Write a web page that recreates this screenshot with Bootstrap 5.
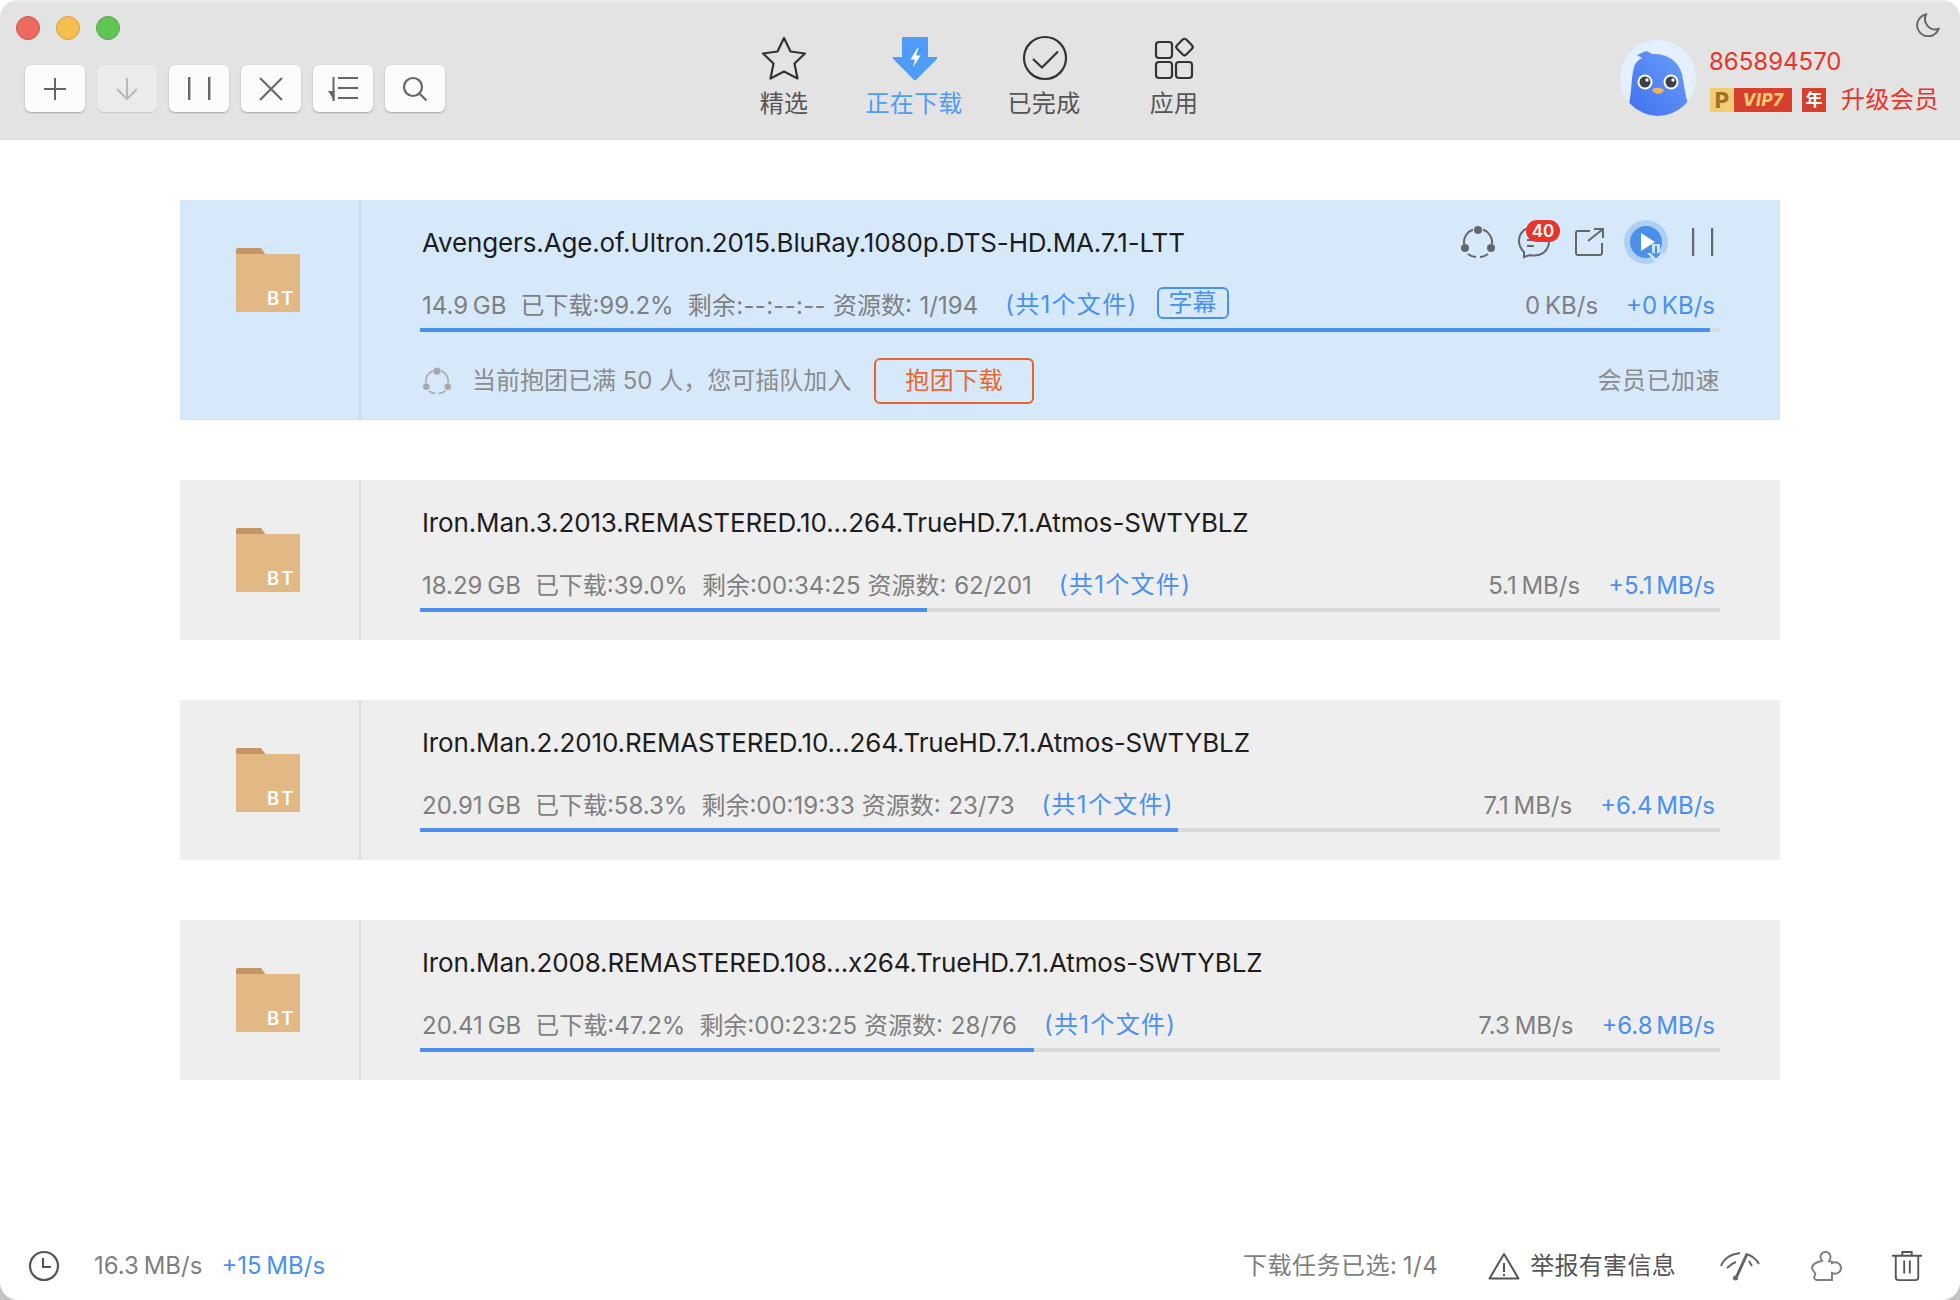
<!DOCTYPE html>
<html lang="zh">
<head>
<meta charset="utf-8">
<title>下载</title>
<link href="https://cdn.jsdelivr.net/npm/bootstrap@5.3.0/dist/css/bootstrap.min.css" rel="stylesheet">
<style>
html,body{height:1300px;overflow:hidden}
body{margin:0;background:linear-gradient(#fff 50%,#c4c4c4 50%);font-family:Inter,"Noto Sans CJK SC",sans-serif;font-size:24px;color:#7f7f7f}
.win{width:1960px;height:1300px;border-radius:18px;overflow:hidden;background:#fff}
.topbar{height:140px;flex:none;background:#e3e3e3;border-top:2px solid #eee}
.leftpane{width:719px;flex:none;padding:14px 0 0 16px}
.lights{gap:16px;height:24px}
.dot{width:24px;height:24px;border-radius:50%;border:1px solid}
.d1{background:#ec6a5e;border-color:#d05347}
.d2{background:#f4bf4f;border-color:#d69e3a}
.d3{background:#61c554;border-color:#50a844}
.tools{gap:12px;margin:25px 0 0 9px}
.tbtn{width:60px;height:47px;padding:0;border:0;border-radius:6px;background:#fbfbfb;box-shadow:0 1px 2px rgba(0,0,0,.28);display:flex;align-items:center;justify-content:center}
.tbtn.off,.tbtn.off:disabled{background:#ebebeb;opacity:1;box-shadow:0 1px 1px rgba(0,0,0,.12)}
.navit{width:130px;padding-top:33px;color:#555;line-height:30px;text-align:center;letter-spacing:.3px}
.navit svg{display:block;margin:0 auto 8px;height:46px}
.navit.on{color:#4f9bf8}
.userpane{padding:0 0 0 381px;position:relative;flex:1}
.ava{width:76px;height:76px;margin-top:38px;flex:none}
.uinfo{margin:0 0 0 13px;padding-top:45px;color:#e8352a}
.uname{line-height:30px;font-size:24px}
.vips{margin:11px 0 0 1px;height:24px}
.vp{width:24px;height:24px;background:#f2cd73;color:#a0722a;font-weight:800;font-size:22px;line-height:24px;text-align:center}
.vv{width:58px;height:24px;background:#d83f2c;color:#f2cd73;font-weight:800;font-size:17px;font-style:italic;letter-spacing:.5px;line-height:24px;text-align:center}
.vy{width:24px;height:24px;margin-left:10px;background:#d83f2c;color:#fff;font-weight:700;font-size:17px;line-height:24px;text-align:center}
.upg{margin-left:15px;line-height:24px;white-space:nowrap;letter-spacing:.5px}
.moon{position:absolute;right:20px;top:11px}
.tasks{padding:60px 180px 0;gap:60px}
.taskrow{height:160px;background:#eee}
.taskrow.big{height:220px;background:#d6e9fb}
.foldcell{width:181px;flex:none;border-right:2px solid #dcdcdc;padding:47px 0 0 56px}
.big .foldcell{border-color:#c8dbec}
.folder{width:64px;height:65px;display:block}
.bttx{font-family:Inter,sans-serif;font-size:18.5px;font-weight:600;letter-spacing:3px;fill:#fff}
.bodycell{padding-left:59px;width:1359px;flex:none}
.ttl{height:60px;padding:28px 0 0 2px;line-height:30px;font-size:26px;color:#1d1d1d;letter-spacing:-.14px;white-space:nowrap}
.meta{margin-top:31px;height:30px;line-height:30px;padding:0 5px 0 2px;width:1300px;white-space:nowrap;word-spacing:-2px}
.meta>span{display:inline-block}
.sp1{margin-left:14px}
.sp2{margin-left:14px}
.dash{letter-spacing:.3px}
.sp3{margin-left:7px;word-spacing:1px}
.sp4{margin-left:27px;letter-spacing:1.3px;margin-bottom:2px}
.lnk{color:#4a90f0}
.subt{width:72px;height:32px;border:2px solid #4a90f0;border-radius:6px;color:#4a90f0;line-height:27px;text-align:center;margin-left:19px;margin-bottom:6px}
.spd{margin-left:auto;margin-right:4px}
.spx{word-spacing:-3px}
.trk{height:4px;margin-top:7px;width:1300px;background:#d9d9d9;border-radius:0}
.trk .progress-bar{background:#4a8ef0}
.tic{position:absolute;top:20px;right:65px;height:44px}
.g22{margin-left:22px}
.g24{margin-left:24px}
.g19{margin-left:19px}
.ic4{align-self:flex-start}
.teamrow{height:46px;margin-top:26px;padding-left:3px}
.teamtx{color:#8c8c8c;margin-left:21px}
.tuan{width:160px;height:46px;margin-left:23px;border:2px solid #e8622c;border-radius:6px;color:#e8682f;font-size:24px;letter-spacing:.5px;padding:0;background:transparent;line-height:40px}
.tuan:hover{color:#e8622c;border-color:#e8622c;background:transparent}
.acc{margin-left:auto;color:#8c8c8c;letter-spacing:.5px}
.bdg{position:absolute;left:1346px;top:20px;width:34px;height:22px;background:#e8352a;color:#fff;border-radius:11px;font-size:17px;line-height:22px;font-weight:600;text-align:center;padding:0;margin:0}
.botbar{margin-top:auto;height:70px;padding:2px 38px 0 28px;word-spacing:-2px}
.spdnow{margin-left:34px}
.gapl{margin-left:19px}
.dk{color:#555;margin-left:10px;word-spacing:0;letter-spacing:.3px}
.warnw{margin-left:50px}
.selc{letter-spacing:.5px}
.g44{margin-left:44px}
.g50{margin-left:50px}
</style>
</head>
<body>
<div class="win d-flex flex-column">
  <header class="topbar d-flex">
    <div class="leftpane">
      <div class="lights d-flex"><span class="dot d1"></span><span class="dot d2"></span><span class="dot d3"></span></div>
      <div class="tools d-flex">
        <button class="btn tbtn" aria-label="add"><svg width="24" height="24" viewBox="0 0 24 24" stroke="#666" stroke-width="2" fill="none"><path d="M12 1v22M1 12h22"/></svg></button>
        <button class="btn tbtn off" disabled aria-label="start"><svg width="24" height="24" viewBox="0 0 24 24" stroke="#b9b9b9" stroke-width="2" fill="none"><path d="M12 1v21M2 12l10 10 10-10"/></svg></button>
        <button class="btn tbtn" aria-label="pause"><svg width="24" height="24" viewBox="0 0 24 24" fill="#666"><rect x="1" y="0" width="2.4" height="23"/><rect x="21" y="0" width="2.4" height="23"/></svg></button>
        <button class="btn tbtn" aria-label="delete"><svg width="24" height="24" viewBox="0 0 24 24" stroke="#666" stroke-width="2" fill="none"><path d="M1 1l22 22M23 1L1 23"/></svg></button>
        <button class="btn tbtn" aria-label="sort"><svg width="32" height="26" viewBox="0 0 32 26" fill="#666"><rect x="11" y="1" width="20" height="2"/><rect x="11" y="11" width="20" height="2"/><rect x="11" y="21" width="20" height="2"/><rect x="5.500" y="1" width="2" height="24"/><path d="M1 15h6.500v10z"/></svg></button>
        <button class="btn tbtn" aria-label="search"><svg width="26" height="26" viewBox="0 0 26 26" stroke="#666" stroke-width="2.200" fill="none"><circle cx="11" cy="11" r="9"/><path d="M17.500 17.500l7 7"/></svg></button>
      </div>
    </div>
    <nav class="d-flex">
      <div class="navit"><svg width="46" height="46" viewBox="0 0 46 46" fill="none" stroke="#333" stroke-width="2.200" stroke-linejoin="round"><path d="M23 3l6.500 13.500 14.500 2-10.500 10 3 15L23 36.500 9.500 43.500l3-15L2 18.500l14.500-2z"/></svg>精选</div>
      <div class="navit on"><svg width="46" height="46" viewBox="-1 0 46 46"><path d="M11 2h24a1 1 0 0 1 1 1v19h8.500a1 1 0 0 1 .7 1.700L24.500 44.500a2 2 0 0 1-3 0L1 23.700a1 1 0 0 1 .7-1.700H10V3a1 1 0 0 1 1-1z" fill="#4f9bf8"/><path d="M25.500 13l-7 11.500h4.500l-2 8 7.500-12h-4.500l2.500-7.500z" fill="#fff"/></svg>正在下载</div>
      <div class="navit"><svg width="46" height="46" viewBox="-1 0 46 46" fill="none" stroke="#333" stroke-width="2.200"><circle cx="23" cy="23" r="21"/><path d="M11 24l9 8.500 16-16"/></svg>已完成</div>
      <div class="navit"><svg width="46" height="46" viewBox="-2 0 46 46" fill="none" stroke="#333" stroke-width="2.200"><rect x="3" y="7" width="16" height="16" rx="3"/><rect x="3" y="27" width="16" height="16" rx="3"/><rect x="23" y="27" width="16" height="16" rx="3"/><rect x="25" y="5.500" width="13" height="13" rx="2.500" transform="rotate(45 31.500 12)"/></svg>应用</div>
    </nav>
    <div class="userpane d-flex">
      <svg class="ava" viewBox="0 0 76 76"><defs><linearGradient id="bg1" x1="0" y1="1" x2="1" y2="0"><stop offset="0" stop-color="#3f70f0"/><stop offset="1" stop-color="#6da0f8"/></linearGradient><clipPath id="cc"><circle cx="38" cy="38" r="38"/></clipPath></defs><circle cx="38" cy="38" r="38" fill="#e4f0fe"/><g clip-path="url(#cc)"><path d="M9 64C12 50 11 38 14 27c1-4 4-7 8-9l-5-3 9-4c3 1 4 2 6 3 12-1 26 5 30 20 2 10 3 20 6 30-6 14-46 20-59 0z" fill="url(#bg1)"/></g><circle cx="25" cy="42" r="7.500" fill="#fff"/><circle cx="51" cy="42" r="7.500" fill="#fff"/><circle cx="25" cy="42" r="5.500" fill="#3a3f4a"/><circle cx="51" cy="42" r="5.500" fill="#3a3f4a"/><circle cx="27" cy="40" r="1.700" fill="#fff"/><circle cx="53" cy="40" r="1.700" fill="#fff"/><path d="M32 50c2-3 9-3 12 0-2 5-9 5-12 0z" fill="#edb65a"/></svg>
      <div class="uinfo">
        <div class="uname">865894570</div>
        <div class="vips d-flex"><div class="vp">P</div><div class="vv">VIP7</div><div class="vy">年</div><div class="upg">升级会员</div></div>
      </div>
      <svg class="moon" width="24" height="24" viewBox="0 0 24 24" fill="none" stroke="#666" stroke-width="2"><path d="M10 1.500A11 11 0 1 0 22.500 16 10.500 10.500 0 0 1 10 1.500z"/></svg>
    </div>
  </header>

  <main class="tasks d-flex flex-column">
    <section class="taskrow big d-flex position-relative">
      <div class="foldcell"><svg class="folder" viewBox="0 0 64 65"><path d="M0 8V3a2 2 0 0 1 2-2h23l5 7z" fill="#c79563"/><rect y="7" width="64" height="58" fill="#e2b985"/><text x="31" y="58" class="bttx">BT</text></svg></div>
      <div class="bodycell">
        <div class="ttl">Avengers.Age.of.Ultron.2015.BluRay.1080p.DTS-HD.MA.7.1-LTT</div>
        <div class="meta d-flex align-items-center"><span>14.9 GB</span><span class="sp1">已下载:99.2%</span><span class="sp2 dash">剩余:--:--:--</span><span class="sp3">资源数: 1/194</span><span class="lnk sp4">(共1个文件)</span><span class="subt">字幕</span><span class="spd">0 KB/s</span><span class="lnk ms-4">+0 KB/s</span></div>
        <div class="progress trk"><div class="progress-bar" style="width:99.2%"></div></div>
        <div class="teamrow d-flex align-items-center">
          <svg width="28" height="28" viewBox="0 0 34 34" fill="none" stroke="#a9a9a9" stroke-width="2"><path d="M12 4.500A14 14 0 0 0 3.500 20M22 4.500A14 14 0 0 1 30.500 20M7 29A14 14 0 0 0 15 32M19 32A14 14 0 0 0 27 29"/><circle cx="17" cy="5" r="4.500" fill="#a9a9a9" stroke="none"/><circle cx="4" cy="24" r="4" fill="#a9a9a9" stroke="none"/><circle cx="30" cy="24" r="4" fill="#a9a9a9" stroke="none"/></svg>
          <span class="teamtx">当前抱团已满 50 人，您可插队加入</span>
          <button class="btn tuan">抱团下载</button>
          <span class="acc">会员已加速</span>
        </div>
      </div>
      <div class="tic d-flex align-items-center">
        <svg width="34" height="36" viewBox="0 0 34 36" fill="none" stroke="#666" stroke-width="2"><path d="M12 5.500A14 14 0 0 0 3 20M22 5.500A14 14 0 0 1 31 20M7 30A14 14 0 0 0 15 33M19 33A14 14 0 0 0 27 30"/><circle cx="17" cy="6" r="4" fill="#666" stroke="none"/><circle cx="4" cy="24" r="4" fill="#666" stroke="none"/><circle cx="30" cy="24" r="4" fill="#666" stroke="none"/></svg>
        <svg class="g22" width="34" height="36" viewBox="0 0 34 36" fill="none" stroke="#666" stroke-width="2"><path d="M17 3C8 3 2 9 2 17c0 5 2 8 5 11v5l6-2c1 .4 3 .6 4 .6 9 0 15-6 15-14.600S26 3 17 3zM10 16h10M10 22h7"/></svg>
        <svg class="g24" width="30" height="30" viewBox="0 0 30 30" fill="none" stroke="#666" stroke-width="2"><path d="M15 4H3a2 2 0 0 0-2 2v20a2 2 0 0 0 2 2h22a2 2 0 0 0 2-2V16M28 2L13 14M19 2h9v9"/></svg>
        <svg class="g19 ic4" width="48" height="48" viewBox="0 0 48 48"><circle cx="22" cy="22" r="22" fill="#aed0f7"/><circle cx="22" cy="22" r="16" fill="#4a8fe8"/><path d="M17 13l14 9-14 9z" fill="#fff"/><path d="M28 24h8v9h5l-9 10-9-10h5z" fill="#cfe4fb"/><path d="M32 26v11M28 33l4 4 4-4" stroke="#4a8fe8" stroke-width="2" fill="none"/></svg>
        <svg class="g19" width="24" height="30" viewBox="0 0 24 30" fill="#666"><rect x="1" y="1" width="2.200" height="28"/><rect x="20" y="1" width="2.200" height="28"/></svg>
      </div>
      <span class="badge bdg">40</span>
    </section>

    <section class="taskrow d-flex">
      <div class="foldcell"><svg class="folder" viewBox="0 0 64 65"><path d="M0 8V3a2 2 0 0 1 2-2h23l5 7z" fill="#c79563"/><rect y="7" width="64" height="58" fill="#e2b985"/><text x="31" y="58" class="bttx">BT</text></svg></div>
      <div class="bodycell">
        <div class="ttl">Iron.Man.3.2013.REMASTERED.10...264.TrueHD.7.1.Atmos-SWTYBLZ</div>
        <div class="meta d-flex align-items-center"><span>18.29 GB</span><span class="sp1">已下载:39.0%</span><span class="sp2">剩余:00:34:25</span><span class="sp3">资源数: 62/201</span><span class="lnk sp4">(共1个文件)</span><span class="spd">5.1 MB/s</span><span class="lnk ms-4 spx">+5.1 MB/s</span></div>
        <div class="progress trk"><div class="progress-bar" style="width:39%"></div></div>
      </div>
    </section>

    <section class="taskrow d-flex">
      <div class="foldcell"><svg class="folder" viewBox="0 0 64 65"><path d="M0 8V3a2 2 0 0 1 2-2h23l5 7z" fill="#c79563"/><rect y="7" width="64" height="58" fill="#e2b985"/><text x="31" y="58" class="bttx">BT</text></svg></div>
      <div class="bodycell">
        <div class="ttl">Iron.Man.2.2010.REMASTERED.10...264.TrueHD.7.1.Atmos-SWTYBLZ</div>
        <div class="meta d-flex align-items-center"><span>20.91 GB</span><span class="sp1">已下载:58.3%</span><span class="sp2">剩余:00:19:33</span><span class="sp3">资源数: 23/73</span><span class="lnk sp4">(共1个文件)</span><span class="spd">7.1 MB/s</span><span class="lnk ms-4 spx">+6.4 MB/s</span></div>
        <div class="progress trk"><div class="progress-bar" style="width:58.3%"></div></div>
      </div>
    </section>

    <section class="taskrow d-flex">
      <div class="foldcell"><svg class="folder" viewBox="0 0 64 65"><path d="M0 8V3a2 2 0 0 1 2-2h23l5 7z" fill="#c79563"/><rect y="7" width="64" height="58" fill="#e2b985"/><text x="31" y="58" class="bttx">BT</text></svg></div>
      <div class="bodycell">
        <div class="ttl">Iron.Man.2008.REMASTERED.108...x264.TrueHD.7.1.Atmos-SWTYBLZ</div>
        <div class="meta d-flex align-items-center"><span>20.41 GB</span><span class="sp1">已下载:47.2%</span><span class="sp2">剩余:00:23:25</span><span class="sp3">资源数: 28/76</span><span class="lnk sp4">(共1个文件)</span><span class="spd">7.3 MB/s</span><span class="lnk ms-4 spx">+6.8 MB/s</span></div>
        <div class="progress trk"><div class="progress-bar" style="width:47.2%"></div></div>
      </div>
    </section>
  </main>

  <footer class="botbar d-flex align-items-center">
    <svg width="32" height="32" viewBox="0 0 32 32" fill="none" stroke="#555" stroke-width="2.200"><circle cx="16" cy="16" r="14"/><path d="M15 8v9h8"/></svg>
    <span class="spdnow">16.3 MB/s</span><span class="lnk gapl">+15 MB/s</span>
    <span class="ms-auto selc">下载任务已选: 1/4</span>
    <svg class="warnw" width="32" height="28" viewBox="0 0 32 28" fill="none" stroke="#555" stroke-width="2" stroke-linejoin="round"><path d="M16 2L1.500 26.500h29zM16 11v9M16 22v2"/></svg>
    <span class="dk">举报有害信息</span>
    <svg class="g44" width="40" height="30" viewBox="0 0 40 30" fill="none" stroke="#666" stroke-width="2"><path d="M1 15C4 7 12 3 20 2M26 3c5 1 10 5 13 10M7 17c3-3 6-5 9-6M29 10l3 5"/><path d="M27 3L16 27" stroke-width="3"/><circle cx="15.500" cy="27" r="2.500" fill="#666" stroke="none"/></svg>
    <svg class="g50" width="32" height="30" viewBox="0 0 32 30" fill="none" stroke="#808080" stroke-width="2"><path d="M12 10C9 6 11 1 15.500 1C20 1 22 6 19 10L22 11V12C27 10 31 13 31 17C31 21 27 24 22 22V29H7C5 29 3 27 5 24C7 22 2 20 2 17C2 13 6 12 8 11Z"/></svg>
    <svg class="g50" width="30" height="32" viewBox="0 0 32 32" fill="none" stroke="#555" stroke-width="2"><path d="M0 5h32M11 5V1h10v4M4 6v22a3 3 0 0 0 3 3h18a3 3 0 0 0 3-3V6M13 10v14M19 10v14"/></svg>
  </footer>
</div>
</body>
</html>
